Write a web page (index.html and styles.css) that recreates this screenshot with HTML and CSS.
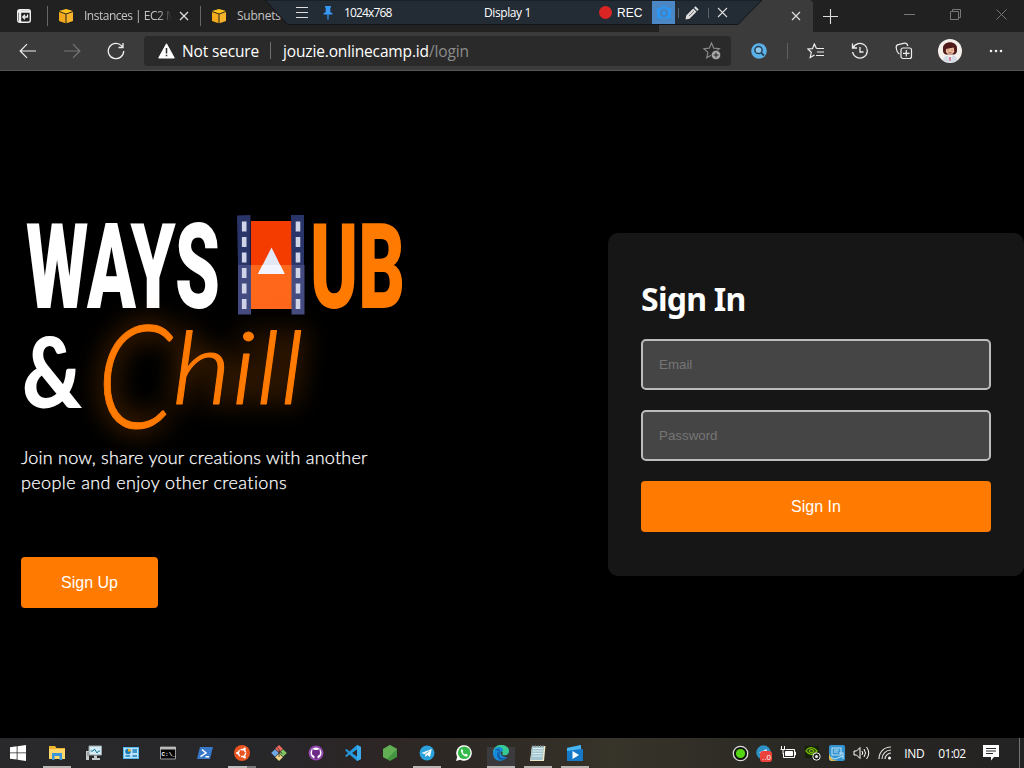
FILE: index.html
```html
<!DOCTYPE html>
<html lang="en">
<head>
<meta charset="utf-8">
<title>WaysHub</title>
<link rel="stylesheet" href="styles.css">
</head>
<body>
<div class="screen">
  <header class="tabs">
    <div class="tab-menu"><svg width="16" height="16" viewBox="0 0 16 16"><rect x="1.7" y="1.7" width="12.6" height="12.6" rx="2" fill="none" stroke="#eee" stroke-width="1.4"/><path d="M2 3.5H14M4 2V14" stroke="#eee" stroke-width="2.4"/><path d="M11.5 6.5V9H7M9 6.8 6.8 9 9 11.2" fill="none" stroke="#eee" stroke-width="1.3"/></svg></div>
    <div class="tab tab-first">
      <svg class="cube" width="16" height="16" viewBox="0 0 16 16"><path d="M1 3 8 1 15 3 8 5.5Z" fill="#ffc51e"/><path d="M1 4 7.5 6.2V15.3L1 13Z" fill="#f3a91c"/><path d="M15 4 8.5 6.2V15.3L15 13Z" fill="#f7b329"/></svg>
      <span class="tab-name">Instances | EC2 M</span>
      <svg class="close" width="10" height="10" viewBox="0 0 10 10"><path d="M1 1 9 9M9 1 1 9" stroke="#ddd" stroke-width="1.3"/></svg>
    </div>
    <div class="tab tab-second">
      <svg class="cube" width="16" height="16" viewBox="0 0 16 16"><path d="M1 3 8 1 15 3 8 5.5Z" fill="#ffc51e"/><path d="M1 4 7.5 6.2V15.3L1 13Z" fill="#f3a91c"/><path d="M15 4 8.5 6.2V15.3L15 13Z" fill="#f7b329"/></svg>
      <span class="tab-label">Subnets</span>
    </div>
    <div class="tab-active"><svg width="10" height="10" viewBox="0 0 10 10"><path d="M1 1 9 9M9 1 1 9" stroke="#ddd" stroke-width="1.2"/></svg></div>
    <div class="tab-new"><svg width="15" height="15" viewBox="0 0 15 15"><path d="M7.5 0V15M0 7.5H15" stroke="#ddd" stroke-width="1.1"/></svg></div>
    <div class="win-btns">
      <span><svg width="11" height="11" viewBox="0 0 11 11"><path d="M0 5.5H11" stroke="#777"/></svg></span>
      <span><svg width="11" height="11" viewBox="0 0 11 11" fill="none" stroke="#777"><path d="M.5 2.5H8.5V10.5H.5ZM2.5 2.5V.5H10.5V8.5H8.5"/></svg></span>
      <span><svg width="11" height="11" viewBox="0 0 11 11"><path d="M.5.5 10.5 10.5M10.5.5.5 10.5" stroke="#777"/></svg></span>
    </div>
  </header>

  <div class="recorder">
    <svg class="rec-shape" width="500" height="25" viewBox="264 0 500 25"><path d="M265 0H762L738 24.500H287.500Z" fill="#232b35" stroke="#11161b"/></svg>
    <div class="rec-row">
      <svg class="rec-menu" width="12" height="12" viewBox="0 0 12 12"><path d="M0 .5H12M0 5.500H12M0 10.500H12" stroke="#ddd"/></svg>
      <svg class="rec-pin" width="10" height="14" viewBox="0 0 10 14"><path d="M2 0H8V1.500H7.300V6L9.500 7.500V8.500H.500V7.500L2.700 6V1.500H2Z" fill="#359af5"/><path d="M5 8V13.500" stroke="#359af5" stroke-width="1.200"/></svg>
      <span class="rec-size">1024x768</span>
      <span class="rec-display">Display 1</span>
      <span class="rec-dot"></span>
      <span class="rec-label">REC</span>
      <span class="rec-camera"><svg width="16" height="13" viewBox="0 0 16 13"><path d="M1 2H4.500L5.500.500H10.500L11.500 2H15V12.500H1Z" fill="#2e95f2"/><circle cx="8" cy="7" r="3.200" fill="none" stroke="#4a7fb8" stroke-width="1.700"/></svg></span>
      <span class="rec-line"></span>
      <svg class="rec-pencil" width="14" height="14" viewBox="0 0 14 14"><path d="M.500 13.500 1.200 9.500 8.200 2.500 11.500 5.800 4.500 12.800ZM9 1.700 10.500.300 13.700 3.500 12.300 5Z" fill="#ddd"/><path d="M4 10 9 5" stroke="#555" stroke-width=".8"/></svg>
      <span class="rec-line"></span>
      <svg class="rec-x" width="11" height="11" viewBox="0 0 11 11"><path d="M1 1 10 10M10 1 1 10" stroke="#ddd" stroke-width="1.100"/></svg>
    </div>
  </div>

  <nav class="toolbar">
    <span class="tool"><svg width="18" height="16" viewBox="0 0 18 16" fill="none" stroke="#eee" stroke-width="1.200"><path d="M17 8H1.500M8 1.200 1.200 8 8 14.800"/></svg></span>
    <span class="tool"><svg width="18" height="16" viewBox="0 0 18 16" fill="none" stroke="#777" stroke-width="1.200"><path d="M1 8H16.500M10 1.200 16.800 8 10 14.800"/></svg></span>
    <span class="tool"><svg width="18" height="18" viewBox="0 0 18 18" fill="none" stroke="#eee" stroke-width="1.300"><path d="M16.700 9A7.700 7.700 0 1 1 14.500 3.600L16 5.500M16 1V5.500H11.500"/></svg></span>
    <div class="address">
      <svg class="warn" width="17" height="16" viewBox="0 0 17 16"><path d="M8.500 .8 16.300 15H.7Z" fill="#fff" stroke="#fff" stroke-linejoin="round"/><path d="M8.500 5V10.500M8.500 11.800V13.300" stroke="#2a2a2a" stroke-width="1.500"/></svg>
      <span class="secure">Not secure</span>
      <span class="addr-line"></span>
      <span class="url">jouzie.onlinecamp.id<span class="path">/login</span></span>
      <svg class="addstar" width="18" height="18" viewBox="0 0 18 18"><path d="M8.500 1 10.700 6.200 16.300 6.700 12 10.400 13.300 15.800 8.500 13 3.700 15.800 4.900 10.400.9 6.700 6.300 6.200Z" fill="none" stroke="#888" stroke-width="1.200"/><circle cx="13" cy="13" r="4.700" fill="#a9a9a9" stroke="#2a2a2a" stroke-width=".7"/><path d="M13 10.500V15.500M10.500 13H15.500" stroke="#222"/></svg>
    </div>
    <span class="tool tool-wide"><svg width="16" height="16" viewBox="0 0 16 16"><circle cx="8" cy="8" r="7.800" fill="#5bb2e8"/><circle cx="7.500" cy="7" r="3.600" fill="#89c7eb" stroke="#244159" stroke-width="1.500"/><path d="M10 9.700 13 12.500" stroke="#244159" stroke-width="1.800"/></svg></span>
    <span class="tool-line"></span>
    <span class="tool tool-wide"><svg width="18" height="16" viewBox="0 0 18 16" fill="none" stroke="#eee" stroke-width="1.200"><path d="M9.500 5.500 7.300 1 5.500 5.600.8 6 4.300 9.300 3.200 14.500 7.500 12M9.500 5.500H17M10 9H17M9 12.500H17"/></svg></span>
    <span class="tool tool-history"><svg width="18" height="18" viewBox="0 0 18 18" fill="none" stroke="#eee" stroke-width="1.300"><path d="M1.500 1.500V6H6M2 6A7.400 7.400 0 1 1 1.600 10M9 5V10H12.500"/></svg></span>
    <span class="tool tool-wide"><svg width="18" height="18" viewBox="0 0 18 18" fill="none" stroke="#eee" stroke-width="1.200"><rect x="6" y="6" width="10.500" height="10.500" rx="2"/><path d="M11.300 8V14.500M8 11.300H14.500M4.500 12C2.500 11 1.500 8 1.200 5.500 1 3.800 1.700 3 3.200 2.600L9.500 1.200C11.300 1 12.300 2 12.800 4"/></svg></span>
    <span class="tool tool-avatar"><svg width="24" height="24" viewBox="0 0 24 24"><circle cx="12" cy="12" r="12" fill="#f5efec"/><path d="M5 10C4 1 20 1 19 10 19.500 13 18 15 16.500 15.500H7.500C6 15 4.500 13 5 10Z" fill="#50191a"/><path d="M8 10 15.800 8.500 16.300 13Q12 18.500 7.800 13Z" fill="#f1bd9e"/><path d="M4.500 21 7 17.500 10 16.500 12 23 14.500 16.500 17.500 17.500 19.500 21Q12 26 4.500 21Z" fill="#d3dbe6"/><path d="M11.300 18H12.700L12.500 22H11.500Z" fill="#bc486c"/><path d="M9.500 11H10.500M13.500 11H14.500M10.500 13.800H13.500" stroke="#60332e" stroke-width=".8"/></svg></span>
    <span class="tool tool-dots"><svg width="14" height="4" viewBox="0 0 14 4" fill="#eee"><circle cx="2" cy="2" r="1.300"/><circle cx="7" cy="2" r="1.300"/><circle cx="12" cy="2" r="1.300"/></svg></span>
  </nav>

  <main class="page">
    <section class="hero">
      <svg class="brand" width="403" height="245" viewBox="21 205 403 245">
        <g class="display">
          <text class="caps white" x="26" y="308" textLength="194" lengthAdjust="spacingAndGlyphs">WAYS</text>
          <text class="caps orange" x="310" y="308" textLength="95" lengthAdjust="spacingAndGlyphs">UB</text>
          <text class="amp white" x="22" y="408" textLength="60" lengthAdjust="spacingAndGlyphs">&amp;</text>
        </g>
        <path d="M251 221H292V309H251Z" fill="#f43b00"/><path d="M251 265H292V309H251Z" fill="#ff671b"/>
        <path d="M237 215.500 250.500 215V265H238Z" fill="#293568"/><path d="M238 265H251V314.500H238Z" fill="#444b80"/>
        <path d="M291 215H304V265H291.500Z" fill="#293568"/><path d="M291.500 265H304.500V314.500H291.500Z" fill="#444b80"/>
        <path d="M244.200 221.500V312" stroke="#cfd4e8" stroke-width="4.600" stroke-dasharray="10 5.500"/>
        <path d="M298 221.500V312" stroke="#cfd4e8" stroke-width="4.600" stroke-dasharray="10 5.500"/>
        <path d="M271.500 247.500 284.700 274H258Z" fill="#e3e8f4"/><path d="M262.500 265H280.200L284.700 274H258Z" fill="#f2f5fd"/>
        <g class="chill orange">
          <text class="big-c" x="97" y="428" textLength="76" lengthAdjust="spacingAndGlyphs">C</text>
          <text class="small-c" x="172" y="404" textLength="132" lengthAdjust="spacingAndGlyphs">hill</text>
        </g>
      </svg>
      <p class="intro">Join now, share your creations with another<br><span class="intro-end">people and enjoy other creations</span></p>
      <button class="btn signup">Sign Up</button>
    </section>
    <form class="card">
      <h1>Sign In</h1>
      <input type="email" placeholder="Email">
      <input type="password" placeholder="Password">
      <button class="btn" type="button">Sign In</button>
    </form>
  </main>

  <footer class="taskbar">
    <div class="apps">
      <span class="app start"><svg width="16" height="16" viewBox="0 0 16 16" fill="#fff"><path d="M0 2.300 6.700 1.300V7.500H0ZM7.500 1.200 16 0V7.500H7.500ZM0 8.300H6.700V14.600L0 13.700ZM7.500 8.300H16V16L7.500 14.800Z"/></svg></span>
      <span class="app open"><svg width="16" height="16" viewBox="0 0 16 16"><path d="M0 1H6L7.500 3H16V14H0Z" fill="#eeb52c"/><path d="M0 4H16V14H0Z" fill="#ffd76a"/><path d="M3 15V8H13V15H10.500V11H5.500V15Z" fill="#3b96dc"/></svg></span>
      <span class="app"><svg width="16" height="16" viewBox="0 0 16 16"><path d="M3 1H15.500V10H3Z" fill="#d7ebf5" stroke="#9aa5aa"/><path d="M4.500 6H7L8.500 4 11 8 12.500 6H14" fill="none" stroke="#147b9b"/><path d="M8 10.500H11V13H14V15H6V13H8ZM0 6H3V15H0Z" fill="#c4c9ca"/><path d="M1 8H3M1 10H3" stroke="#777"/></svg></span>
      <span class="app"><svg width="16" height="14" viewBox="0 0 16 14"><path d="M0 1H16V13H0Z" fill="#53b9ee"/><path d="M1 2H15V12H1Z" fill="#b7e3fa"/><circle cx="5" cy="5.500" r="2.800" fill="#187bb8"/><path d="M5 5.500V2.700A2.800 2.800 0 0 1 7.800 5.500Z" fill="#f2ae18"/><path d="M9.500 4H14M9.500 6H14M2.500 10H7M9.500 10H14" stroke="#187bb8" stroke-width="1.300"/></svg></span>
      <span class="app"><svg width="16" height="14" viewBox="0 0 16 14"><path d="M.5 1H15.500V13H.5Z" fill="#050505" stroke="#999"/><path d="M0 1H16V3.500H0Z" fill="#bbb"/><text class="cmd-text" x="1.500" y="10">C:\_</text></svg></span>
      <span class="app"><svg width="16" height="14" viewBox="0 0 16 14"><path d="M3 1H16L13 13H0Z" fill="#3878ca"/><path d="M5 3.500 9 7 3.500 10.700M8.500 10.700H12" fill="none" stroke="#fff" stroke-width="1.500"/></svg></span>
      <span class="app open multi"><svg width="16" height="16" viewBox="0 0 16 16"><circle cx="8" cy="8" r="8" fill="#e95420"/><circle cx="8" cy="8" r="3.600" fill="none" stroke="#fff" stroke-width="1.500" stroke-dasharray="6.500 1"/><g fill="#fff"><circle cx="3.400" cy="8" r="1.300"/><circle cx="10.600" cy="3.700" r="1.300"/><circle cx="10.600" cy="12.300" r="1.300"/></g></svg></span>
      <span class="app"><svg width="16" height="16" viewBox="0 0 16 16"><path d="M8 0 11.800 3.800 8 7.600 4.200 3.800Z" fill="#f06a60"/><path d="M4 4.200 7.800 8 4 11.800.2 8Z" fill="#6fa6e4"/><path d="M12 4.200 15.800 8 12 11.800 8.200 8Z" fill="#84c562"/><path d="M8 8.400 11.800 12.200 8 16 4.200 12.200Z" fill="#f0d58a"/><path d="M6.500 2.500 8 4.500V12M8 6 11.500 8.500" stroke="#292929" stroke-width=".8" fill="none"/></svg></span>
      <span class="app"><svg width="16" height="16" viewBox="0 0 16 16"><circle cx="8" cy="8" r="7.500" fill="#9147ad"/><circle cx="8" cy="8" r="5.500" fill="#fff"/><path d="M4.500 4 6.500 5H9.500L11.500 4 12 8C12 10 10.500 10.500 9.500 11V14H6.500V11C5 10.500 4 10 4 8Z" fill="#6d2b87"/></svg></span>
      <span class="app"><svg width="16" height="16" viewBox="0 0 16 16"><path d="M12 0 16 2V14L12 16 4.500 9.500 1.500 12 0 11 3 8 0 5 1.500 4 4.500 6.500ZM12 4.500 7 8 12 11.500Z" fill="#2499e0" fill-rule="evenodd"/><path d="M12 0 16 2V14L12 16Z" fill="#3babeb"/></svg></span>
      <span class="app"><svg width="16" height="16" viewBox="0 0 16 16"><path d="M8 0 15 4V12L8 16 1 12V4Z" fill="#439541"/><path d="M8 0 15 4 5 14 1 12V4Z" fill="#62ae54"/></svg></span>
      <span class="app open"><svg width="16" height="16" viewBox="0 0 16 16"><circle cx="8" cy="8" r="7.500" fill="#2aa1da"/><path d="M2.500 8 12.700 4 11 12 8.300 10 6.500 12 6 9.200Z" fill="#fff"/><path d="M6 9.200 10.500 6" stroke="#6aaed1"/></svg></span>
      <span class="app"><svg width="16" height="16" viewBox="0 0 16 16"><path d="M0 16 1.200 11.800A7.800 7.800 0 1 1 4.200 14.800Z" fill="#fff"/><circle cx="8.200" cy="7.800" r="6.300" fill="#35b94a"/><path d="M6 4 5 5C5 9 8 11.500 11 11.500L12 10 10 8.800 9 9.500C8 9 7 8 6.600 7L7.300 6Z" fill="#fff"/></svg></span>
      <span class="app open current"><svg width="16" height="16" viewBox="0 0 16 16"><path d="M0 8C0-3 16-2 16 6 16 11 10 11 9 9 12 7 5 2 0 8Z" fill="#35c994"/><path d="M0 8C2-1 11 2 10 6 6 5 7 13 14 12 10 18 0 17 0 8Z" fill="#188bda"/><path d="M2 5C5 3 8 4 7 7 5 11 8 15 14 12 9 17 4 15 4 10 4 7 6 6 7 6Z" fill="#105fa8"/></svg></span>
      <span class="app open"><svg width="16" height="16" viewBox="0 0 16 16"><path d="M2 1H15.500L14 16H0Z" fill="#f0e6c8"/><path d="M2 1H14L12.500 15H.5Z" fill="#a3c4cd"/><path d="M3 3.500H13M2.800 6H12.800M2.500 8.500H12.500M2 11H12.300" stroke="#d9eef1"/><path d="M3 0V2M5.500 0V2M8 0V2M10.500 0V2M13 0V2" stroke="#777"/></svg></span>
      <span class="app open"><svg width="16" height="16" viewBox="0 0 16 16"><path d="M0 3 14 0V4H16V16H0Z" fill="#1579c8"/><path d="M0 3 14 0V4L0 6Z" fill="#49b7ef"/><path d="M5.500 6V14L12 10Z" fill="#fff"/></svg></span>
    </div>
    <div class="tray">
      <span><svg width="17" height="17" viewBox="0 0 17 17"><circle cx="8.500" cy="8.500" r="7.200" fill="#101510" stroke="#ddd" stroke-width="1.300"/><circle cx="8.500" cy="8.500" r="4.600" fill="#55d613"/></svg></span>
      <span><svg width="16" height="17" viewBox="0 0 16 17"><circle cx="7.500" cy="7.500" r="7.200" fill="#2c91c5"/><path d="M3 7.500 11 4 9.500 10Z" fill="#eef"/><rect x="4" y="6" width="12" height="11" rx="3" fill="#ed423b"/><text class="badge" x="6" y="14.500">..0</text></svg></span>
      <span><svg width="16" height="14" viewBox="0 0 16 14" fill="none" stroke="#fff"><path d="M5.500 3.500H14.500V11.500H3.500V7M14.500 6H15.500V9H14.500"/><path d="M5.500 5.500H12.500V9.500H5.500Z" fill="#fff"/><path d="M1.500 0V3M4.500 0V3M.5 3.500H5M3 3V8"/></svg></span>
      <span><svg width="16" height="16" viewBox="0 0 16 16"><path d="M0 1H14V13H0Z" fill="#15210b"/><path d="M1 6C4 1 9 2 12 6 8 11 4 10 1 6ZM4 6C5 8 8 8 9 6 8 4 5 4 4 6" fill="none" stroke="#76b900" stroke-width="1.300"/><circle cx="11.500" cy="11.500" r="3.700" fill="#222" stroke="#eee"/><circle cx="11.500" cy="11.500" r="1.500" fill="#eee"/></svg></span>
      <span><svg width="16" height="16" viewBox="0 0 16 16"><rect width="16" height="16" rx="2" fill="#3293d0"/><path d="M3 3H12V10H3ZM1 12 6 14 14 11M5 5H10M5 7H9M10 8H14V14" fill="none" stroke="#b9e0f5" stroke-width="1.100"/><path d="M0 8Q1 15 9 16H2L0 14Z" fill="#e0b94d"/></svg></span>
      <span><svg width="17" height="14" viewBox="0 0 17 14" fill="none" stroke="#fff"><path d="M1 5H3.500L7 1.500V12.500L3.500 9H1ZM9 5Q10.500 7 9 9M11 3Q14 7 11 11M13.500 1Q18 7 13.500 13"/></svg></span>
      <span><svg width="14" height="14" viewBox="0 0 14 14" fill="none" stroke="#ddd" stroke-width="1.200"><path d="M1 13C1 6 6 1 13 1M4 13C4 8 8 4 13 4M7 13C7 10 10 7 13 7"/><circle cx="11.500" cy="12" r="1.500" fill="#fff" stroke="none"/></svg></span>
      <b class="lang">IND</b><b class="clock">01:02</b>
      <svg class="note" width="16" height="16" viewBox="0 0 16 16"><path d="M0 0H16V12H11L8 15.500V12H0Z" fill="#fff"/><path d="M3 3.500H13M3 6H13M3 8.500H10" stroke="#292929" stroke-width="1.200"/></svg>
      <i class="desktop-edge"></i>
    </div>
  </footer>
</div>
</body>
</html>
```

FILE: styles.css
```css
* { box-sizing: border-box; }
body { margin: 0; background: #000; color: #fff; font-family: "Open Sans", "Noto Sans", sans-serif; }
svg { display: block; flex: none; }
.screen { position: relative; display: flex; flex-direction: column; width: 1024px; height: 768px; overflow: hidden; }
.tabs { display: flex; height: 32px; background: #212121; font-size: 12px; color: #c4c4c4; }
.tab-menu { width: 48px; height: 32px; padding-left: 16px; display: flex; align-items: center; }
.tab { display: flex; align-items: center; background: linear-gradient(#666, #666) 0 6px / 1px 20px no-repeat; }
.tab-first { width: 153px; margin-left: -1px; padding-left: 11px; }
.tab-second { width: 459px; padding-left: 11px; }
.cube { margin-right: 10px; }
.tab-name { width: 88px; overflow: hidden; white-space: nowrap; letter-spacing: -.5px; -webkit-mask-image: linear-gradient(90deg, #000 84%, transparent); mask-image: linear-gradient(90deg, #000 84%, transparent); }
.tab-label { letter-spacing: -.25px; }
.tab-name, .tab-label { line-height: 16px; padding-bottom: 1px; }
.close { margin-left: 7px; }
.tab-active { width: 154px; padding-left: 132px; display: flex; align-items: center; background: #3b3b3b; border-radius: 4px 4px 0 0; }
.tab-new { width: 73px; padding-left: 10px; display: flex; align-items: center; }
.win-btns { display: flex; padding-bottom: 4px; }
.win-btns span { width: 46px; display: grid; place-items: center; }
.recorder { position: absolute; left: 264px; top: 0; width: 500px; height: 25px; font-size: 12px; }
.rec-shape { position: absolute; inset: 0; }
.rec-row { position: relative; height: 25px; padding-left: 32px; display: flex; align-items: center; white-space: nowrap; }
.rec-pin { margin-left: 15px; }
.rec-size { width: 151px; padding-left: 11px; letter-spacing: -.85px; }
.rec-display { width: 115px; letter-spacing: -.4px; }
.rec-size, .rec-display, .rec-label { line-height: 24px; }
.rec-dot { width: 13px; height: 13px; background: #db2525; border-radius: 50%; }
.rec-label { width: 40px; padding-left: 5px; font-family: "Liberation Sans", sans-serif; }
.rec-camera { width: 23px; height: 23px; display: grid; place-items: center; background: #4b87c5; }
.rec-line { width: 1px; height: 10px; background: #59616b; margin-left: 3px; }
.rec-pencil { margin-left: 6px; }
.rec-pencil + .rec-line { margin-left: 9px; }
.rec-x { margin-left: 8px; }
.toolbar { height: 39px; padding-left: 6px; padding-bottom: 1px; display: flex; align-items: center; background: #3b3b3b; border-bottom: 1px solid #555; }
.tool { width: 44px; display: grid; place-items: center; flex: none; }
.tool-wide { width: 56px; }
.tool-history { width: 32px; }
.tool-avatar { width: 36px; }
.tool-dots { width: 56px; }
.tool-line { width: 1px; height: 16px; background: #606060; }
.address { width: 587px; height: 30px; margin-left: 6px; padding: 0 10px 0 14px; display: flex; align-items: center; background: #2a2a2a; border-radius: 4px; font-size: 15.500px; white-space: nowrap; }
.secure { width: 88px; padding-left: 7px; letter-spacing: -.15px; }
.addr-line { width: 1px; height: 17px; background: #707070; margin-left: 7px; }
.url { margin-left: 12px; letter-spacing: -.15px; }
.path { color: #8c8c8c; }
.addstar { margin-left: auto; }
.page { height: 667px; display: flex; justify-content: space-between; align-items: flex-start; }
.hero { padding: 134px 0 0 21px; width: 450px; }
.caps { font: 900 118px Roboto, sans-serif; }
.amp { font: 900 98px Lato, sans-serif; }
.white { fill: #fff; }
.orange { fill: #ff7a00; }
.chill { font-family: Lato, sans-serif; font-style: italic; font-weight: 300; stroke: #ff7a00; stroke-width: 1px; stroke-linejoin: round; filter: drop-shadow(0 0 13px rgba(255, 122, 0, .6)); }
.big-c { font-size: 145px; }
.small-c { font-size: 101px; }
.brand { overflow: visible; }
.intro { margin: -5px 0 0; font: 300 18px/25px Lato, sans-serif; letter-spacing: .22px; white-space: nowrap; -webkit-text-stroke: .25px #fff; }
.intro-end { letter-spacing: .38px; }
.btn { width: 100%; height: 51px; display: block; padding: 0; border: 0; border-radius: 4px; background: #ff7a00; color: #fff; font: 16px "Liberation Sans", Arial, sans-serif; }
.signup { width: 137px; margin-top: 62px; }
.card { width: 416px; height: 343px; margin-top: 162px; padding: 44px 33px 0; background: #161616; border-radius: 10px; }
.card h1 { margin: 0 0 18px; font: 700 32px/44px "Noto Sans", "Open Sans", sans-serif; letter-spacing: -.75px; }
.card input { display: block; width: 350px; height: 51px; margin: 0 0 20px; padding: 0 16px; border: 2px solid #bcbcbc; border-radius: 5px; background: #454545; font: 13.333px "Liberation Sans", Arial, sans-serif; }
.card input::placeholder { color: #757575; opacity: 1; }
.taskbar { height: 30px; display: flex; justify-content: space-between; background: linear-gradient(90deg, #29292c 0, #27272a 270px, #2c2525 360px, #302b25 520px, #37342a 610px, #302e26 700px, #272622 830px, #242323); }
.apps { display: flex; }
.app { width: 37px; height: 30px; display: grid; place-items: center; background-repeat: no-repeat; }
.start { width: 38px; padding-right: 2px; }
.open { background-image: linear-gradient(#b9b5b2, #b9b5b2); background-size: 28px 2px; background-position: 50% 100%; }
.multi { background-image: linear-gradient(90deg, #bbb 19px, #777 19px); }
.current { background-image: linear-gradient(#b9b5b2, #b9b5b2), linear-gradient(#3b3b3e, #3b3b3e); background-size: 28px 2px, 28px 21px; }
.cmd-text { font: 700 6px "Liberation Mono", monospace; fill: #fff; }
.badge { font: 8px "Liberation Sans", sans-serif; fill: #fff; }
.tray { display: flex; align-items: center; width: 296px; font-size: 12px; }
.tray span { width: 24.200px; display: grid; place-items: center; }
.tray b { font-weight: 400; }
.lang { width: 34px; padding-left: 7px; letter-spacing: -.3px; }
.clock { width: 45px; padding-left: 7px; letter-spacing: -.7px; }
.note { margin-left: auto; }
.desktop-edge { width: 1px; height: 30px; background: #77736e; margin: 0 4px 0 20px; }
```
